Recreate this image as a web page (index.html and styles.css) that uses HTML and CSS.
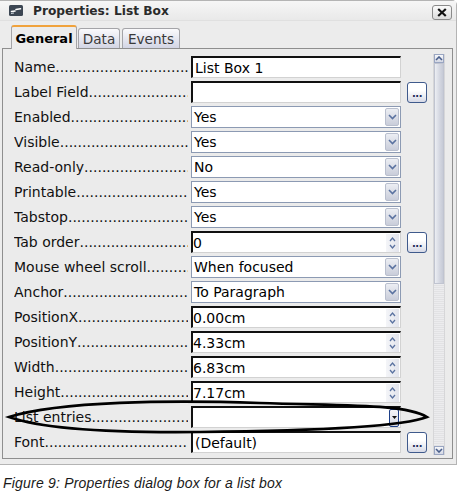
FILE: index.html
```html
<!DOCTYPE html>
<html>
<head>
<meta charset="utf-8">
<link rel="stylesheet" href="styles.css">
</head>
<body>
<div class="page">
  <div class="dialog">
    <div class="titlebar">
      <svg class="appicon" width="14" height="11" viewBox="0 0 14 11"><rect width="14" height="11" rx="1.5" fill="#3c4653"/><path d="M2.5 6.5 L6 6 M7 4.5 L11.5 3.8" stroke="#fff" stroke-width="1.6" stroke-linecap="round"/><path d="M2 8.5 L5 8" stroke="#cfd6de" stroke-width="1"/></svg>
      <span class="title">Properties: List Box</span>
      <div class="close"><svg width="10" height="9" viewBox="0 0 10 9"><path d="M1.2 1 L8.8 8 M8.8 1 L1.2 8" stroke="#111" stroke-width="2.2"/></svg></div>
    </div>
    <div class="tabs">
      <div class="tab active">General</div>
      <div class="tab data">Data</div>
      <div class="tab events">Events</div>
    </div>
    <div class="panel">
      <div class="rows">
        <div class="row"><span class="label">Name</span><div class="field text">List Box 1</div></div>
        <div class="row"><span class="label">Label Field</span><div class="field text"></div><div class="more">...</div></div>
        <div class="row"><span class="label">Enabled</span><div class="field select"><span>Yes</span><span class="drop"><svg width="9" height="6" viewBox="0 0 9 6"><path d="M1 1 L4.5 4.5 L8 1" fill="none" stroke="#5a72a0" stroke-width="1.6"/></svg></span></div></div>
        <div class="row"><span class="label">Visible</span><div class="field select"><span>Yes</span><span class="drop"><svg width="9" height="6" viewBox="0 0 9 6"><path d="M1 1 L4.5 4.5 L8 1" fill="none" stroke="#5a72a0" stroke-width="1.6"/></svg></span></div></div>
        <div class="row"><span class="label">Read-only</span><div class="field select"><span>No</span><span class="drop"><svg width="9" height="6" viewBox="0 0 9 6"><path d="M1 1 L4.5 4.5 L8 1" fill="none" stroke="#5a72a0" stroke-width="1.6"/></svg></span></div></div>
        <div class="row"><span class="label">Printable</span><div class="field select"><span>Yes</span><span class="drop"><svg width="9" height="6" viewBox="0 0 9 6"><path d="M1 1 L4.5 4.5 L8 1" fill="none" stroke="#5a72a0" stroke-width="1.6"/></svg></span></div></div>
        <div class="row"><span class="label">Tabstop</span><div class="field select"><span>Yes</span><span class="drop"><svg width="9" height="6" viewBox="0 0 9 6"><path d="M1 1 L4.5 4.5 L8 1" fill="none" stroke="#5a72a0" stroke-width="1.6"/></svg></span></div></div>
        <div class="row"><span class="label">Tab order</span><div class="field spin"><span>0</span><span class="spinbtn"><svg width="9" height="16" viewBox="0 0 9 16"><path d="M2 6 L4.5 3 L7 6 M2 10 L4.5 13 L7 10" fill="none" stroke="#5a72a0" stroke-width="1.3"/></svg></span></div><div class="more">...</div></div>
        <div class="row"><span class="label">Mouse wheel scroll</span><div class="field select"><span>When focused</span><span class="drop"><svg width="9" height="6" viewBox="0 0 9 6"><path d="M1 1 L4.5 4.5 L8 1" fill="none" stroke="#5a72a0" stroke-width="1.6"/></svg></span></div></div>
        <div class="row"><span class="label">Anchor</span><div class="field select"><span>To Paragraph</span><span class="drop"><svg width="9" height="6" viewBox="0 0 9 6"><path d="M1 1 L4.5 4.5 L8 1" fill="none" stroke="#5a72a0" stroke-width="1.6"/></svg></span></div></div>
        <div class="row"><span class="label">PositionX</span><div class="field spin"><span>0.00cm</span><span class="spinbtn"><svg width="9" height="16" viewBox="0 0 9 16"><path d="M2 6 L4.5 3 L7 6 M2 10 L4.5 13 L7 10" fill="none" stroke="#5a72a0" stroke-width="1.3"/></svg></span></div></div>
        <div class="row"><span class="label">PositionY</span><div class="field spin"><span>4.33cm</span><span class="spinbtn"><svg width="9" height="16" viewBox="0 0 9 16"><path d="M2 6 L4.5 3 L7 6 M2 10 L4.5 13 L7 10" fill="none" stroke="#5a72a0" stroke-width="1.3"/></svg></span></div></div>
        <div class="row"><span class="label">Width</span><div class="field spin"><span>6.83cm</span><span class="spinbtn"><svg width="9" height="16" viewBox="0 0 9 16"><path d="M2 6 L4.5 3 L7 6 M2 10 L4.5 13 L7 10" fill="none" stroke="#5a72a0" stroke-width="1.3"/></svg></span></div></div>
        <div class="row"><span class="label">Height</span><div class="field spin"><span>7.17cm</span><span class="spinbtn"><svg width="9" height="16" viewBox="0 0 9 16"><path d="M2 6 L4.5 3 L7 6 M2 10 L4.5 13 L7 10" fill="none" stroke="#5a72a0" stroke-width="1.3"/></svg></span></div></div>
        <div class="row"><span class="label">List entries</span><div class="field list"><span></span><span class="listbtn"><svg width="5" height="3" viewBox="0 0 5 3"><path d="M0 0 L5 0 L2.5 3 Z" fill="#111"/></svg></span></div></div>
        <div class="row"><span class="label">Font</span><div class="field text">(Default)</div><div class="more">...</div></div>
      </div>
      <div class="scrollbar">
        <div class="sbtn"><svg width="8" height="5" viewBox="0 0 8 5"><path d="M1 4 L4 1 L7 4" fill="none" stroke="#4a5f8c" stroke-width="1.6"/></svg></div>
        <div class="thumb"></div>
        <div class="track"></div>
        <div class="sbtn"><svg width="8" height="5" viewBox="0 0 8 5"><path d="M1 1 L4 4 L7 1" fill="none" stroke="#4a5f8c" stroke-width="1.6"/></svg></div>
      </div>
    </div>
  </div>
  <svg class="annotation" width="461" height="500" viewBox="0 0 461 500"><path d="M427 417 C405 404 350 406 260 403 C170 400 60 401 9 417 C40 428 110 433 200 432 C300 431 400 428 427 417 Z" fill="none" stroke="#000" stroke-width="2.6"/></svg>
  <p class="caption">Figure 9: Properties dialog box for a list box</p>
</div>
</body>
</html>
```

FILE: styles.css
```css
html, body {
  margin: 0;
  padding: 0;
  background: #ffffff;
}

.page {
  position: relative;
  width: 461px;
  height: 500px;
  font-family: "DejaVu Sans", sans-serif;
}

.dialog {
  width: 457px;
  height: 465px;
  background: #ececec;
  border: 1px solid #b4b4b4;
  border-left: none;
  border-radius: 0 5px 0 0;
  box-sizing: border-box;
  display: flex;
  flex-direction: column;
}

.titlebar {
  height: 20px;
  display: flex;
  align-items: center;
  background: linear-gradient(#f6f6f6, #e9e9e9);
  border-bottom: 1px solid #e0e0e0;
  box-sizing: border-box;
}

.appicon {
  margin-left: 9px;
  flex: none;
}

.title {
  margin-left: 10px;
  font-weight: bold;
  font-size: 12.2px;
  color: #2a2a2a;
}

.close {
  margin-left: auto;
  margin-right: 4px;
  margin-top: 4px;
  width: 20px;
  height: 15px;
  box-sizing: border-box;
  border: 1px solid #8a8a8a;
  border-radius: 3px;
  background: linear-gradient(#fbfbfb, #dcdcdc);
  display: flex;
  align-items: center;
  justify-content: center;
}

.tabs {
  height: 27px;
  display: flex;
  align-items: flex-end;
  padding-left: 11px;
  position: relative;
  z-index: 1;
}

.tab {
  height: 20px;
  box-sizing: border-box;
  border: 1px solid #a4a4a8;
  border-bottom: none;
  border-radius: 3px 3px 0 0;
  background: linear-gradient(#fafafc, #d3d5e4);
  font-size: 13.6px;
  color: #3a3a3a;
  display: flex;
  align-items: center;
  justify-content: center;
  padding-top: 1px;
}

.tab.active {
  width: 66px;
  height: 24px;
  margin-bottom: -1px;
  background: #ececec;
  border-top: 2px solid #f0a23c;
  font-weight: bold;
  font-size: 13px;
  color: #000;
  padding-top: 0;
}

.tab.data {
  width: 42px;
  margin-left: 1px;
}

.tab.events {
  width: 58px;
  margin-left: 2px;
}

.panel {
  margin-left: 2px;
  width: 451px;
  height: 411px;
  box-sizing: border-box;
  border: 1px solid #8e8e8e;
  background: #ebebeb;
  display: flex;
  padding: 7px 0 0 11px;
}

.rows {
  width: 413px;
  display: flex;
  flex-direction: column;
  gap: 3px;
}

.row {
  height: 22px;
  display: flex;
  align-items: center;
  font-size: 14px;
}

.label {
  width: 177px;
  flex: none;
  display: flex;
  white-space: nowrap;
  overflow: hidden;
  padding-right: 3px;
  box-sizing: border-box;
  color: #111;
}

.label::after {
  content: "...............................................................";
  flex: 1;
  min-width: 0;
  overflow: hidden;
}

.field {
  width: 210px;
  height: 22px;
  box-sizing: border-box;
  background: #fff;
  display: flex;
  align-items: center;
  white-space: nowrap;
  color: #000;
  flex: none;
}

.text, .spin, .list {
  border-top: 2px solid #111;
  border-left: 2px solid #111;
  border-right: 1px solid #d2d2d2;
  border-bottom: 1px solid #d2d2d2;
}

.text {
  padding-left: 2px;
}

.spin {
  padding-left: 0;
}

.select {
  border: 1px solid #8c9ab3;
  padding-left: 2px;
}

.drop {
  margin-left: auto;
  margin-right: 1px;
  width: 14px;
  height: 18px;
  box-sizing: border-box;
  border: 1px solid #b9bfce;
  border-radius: 2px;
  background: linear-gradient(#eceef3, #c9cdda);
  display: flex;
  align-items: center;
  justify-content: center;
}

.spinbtn {
  margin-left: auto;
  margin-right: 1px;
  width: 13px;
  height: 18px;
  background: linear-gradient(90deg, #f4f5f8, #e2e4ec);
  display: flex;
  align-items: center;
  justify-content: center;
}

.listbtn {
  margin-left: auto;
  margin-right: 1px;
  width: 10px;
  height: 18px;
  box-sizing: border-box;
  border: 1px solid #1d3f88;
  border-radius: 2px;
  background: linear-gradient(#f4f5f9, #d6d9e4);
  display: flex;
  align-items: center;
  justify-content: center;
}

.more {
  margin-left: 6px;
  width: 20px;
  height: 21px;
  box-sizing: border-box;
  border: 1px solid #3f5a8c;
  border-radius: 3px;
  background: linear-gradient(#ffffff 40%, #d6d9e6);
  font-size: 10px;
  font-weight: bold;
  color: #1e2a55;
  letter-spacing: -0.5px;
  display: flex;
  align-items: center;
  justify-content: center;
  padding-top: 3px;
  flex: none;
}

.scrollbar {
  margin-left: 6px;
  margin-top: -2px;
  width: 12px;
  height: 401px;
  box-sizing: border-box;
  display: flex;
  flex-direction: column;
  background: #e4e4e6;
  border-left: 1px solid #d6d6d8;
  border-right: 1px solid #d6d6d8;
}

.sbtn {
  height: 9px;
  flex: none;
  box-sizing: border-box;
  border: 1px solid #9aa6c2;
  background: linear-gradient(#f6f7fa, #d4d8e4);
  display: flex;
  align-items: center;
  justify-content: center;
}

.thumb {
  height: 221px;
  flex: none;
  box-sizing: border-box;
  border: 1px solid #c0c4d0;
  background: linear-gradient(90deg, #eceef3, #d3d6e0 60%, #c6cad6);
}

.track {
  flex: 1;
  background: repeating-linear-gradient(#ececee 0 1px, #e2e2e4 1px 2px);
}

.annotation {
  position: absolute;
  left: 0;
  top: 0;
  pointer-events: none;
}

.caption {
  margin: 10px 0 0 3px;
  font-family: "Liberation Sans", Arial, sans-serif;
  font-style: italic;
  font-size: 14px;
  letter-spacing: 0.2px;
  color: #1a1a1a;
  line-height: 16px;
}
```
